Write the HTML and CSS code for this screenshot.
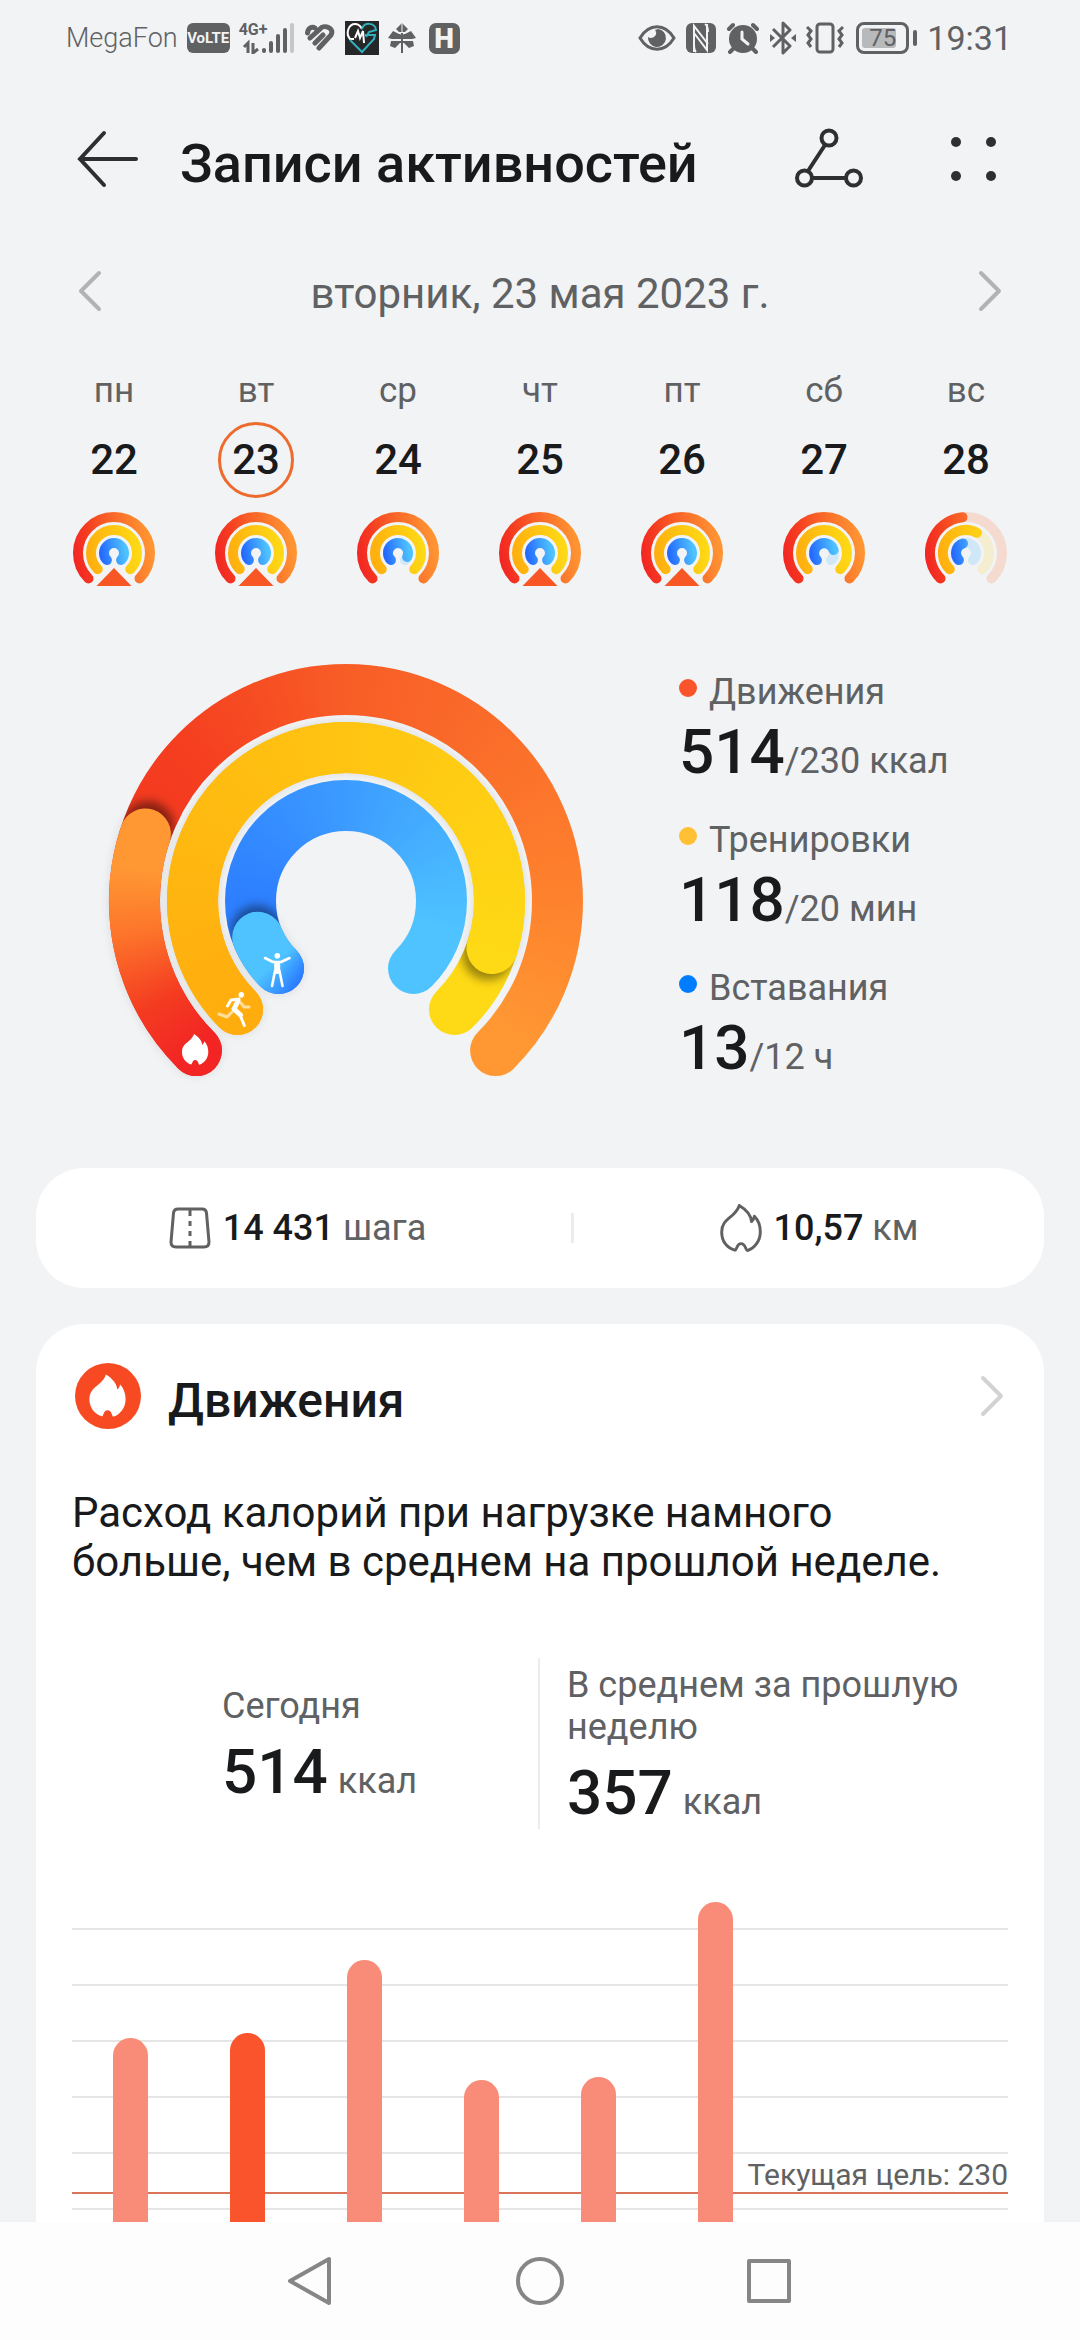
FILE: index.html
```html
<!DOCTYPE html>
<html lang="ru">
  <head>
    <meta charset="UTF-8" />
    <meta name="viewport" content="width=device-width, initial-scale=1.0" />
    <title>Записи активностей</title>
    <link rel="stylesheet" href="styles.css">
  </head>
  <body>
    <!-- Shared shapes -->
    <svg class="defs" width="0" height="0" aria-hidden="true">
      <defs>
        <linearGradient id="miniRed" gradientUnits="userSpaceOnUse" x1="-38" y1="25" x2="40" y2="10">
          <stop offset="0" stop-color="#f22424" />
          <stop offset="0.25" stop-color="#f53c20" />
          <stop offset="0.5" stop-color="#f85d26" />
          <stop offset="1" stop-color="#ff9432" />
        </linearGradient>
        <linearGradient id="miniYellow" gradientUnits="userSpaceOnUse" x1="-26" y1="16" x2="27" y2="8">
          <stop offset="0" stop-color="#ffad0e" />
          <stop offset="1" stop-color="#fed915" />
        </linearGradient>
        <linearGradient id="miniBlue" gradientUnits="userSpaceOnUse" x1="-12" y1="10" x2="13" y2="6">
          <stop offset="0" stop-color="#2468ff" />
          <stop offset="1" stop-color="#4ec3ff" />
        </linearGradient>
        <symbol id="mini-track" viewBox="-41 -41 82 82">
          <g fill="none" stroke-width="10" stroke-linecap="round">
            <path stroke="#f4dacf" d="M-25.5 25.5A36 36 0 1 1 25.5 25.5" />
            <path stroke="#f4edd0" d="M-16.3 16.3A23 23 0 1 1 16.3 16.3" />
            <path stroke="#cfe7f6" d="M-7.1 7.1A10 10 0 1 1 7.1 7.1" />
          </g>
        </symbol>
        <symbol id="mini-outer" viewBox="-41 -41 82 82">
          <g fill="none" stroke-width="10" stroke-linecap="round">
            <path stroke="url(#miniRed)" d="M-25.5 25.5A36 36 0 1 1 25.5 25.5" />
            <path stroke="url(#miniYellow)" d="M-16.3 16.3A23 23 0 1 1 16.3 16.3" />
          </g>
        </symbol>
        <symbol id="mini-full" viewBox="-41 -41 82 82">
          <use href="#mini-outer" x="-41" y="-41" width="82" height="82" />
          <path fill="none" stroke="url(#miniBlue)" stroke-width="10" stroke-linecap="round" d="M-7.1 7.1A10 10 0 1 1 7.1 7.1" />
        </symbol>
        <symbol id="mini-goal" viewBox="-41 -41 82 82">
          <use href="#mini-full" x="-41" y="-41" width="82" height="82" />
          <path fill="#f85725" d="M0 15L17.5 33H-17.5Z" />
        </symbol>
        <symbol id="flame" viewBox="-1 -1 28.3 32.7">
          <path d="M12 0C17 3 20 7 20.3 11C21.3 10 22 9 22.3 7.3C25 10 26.3 14 26.3 18C26.3 24 22.5 29 17.5 30.7C16.2 30.7 16.5 26 13.2 26C10 26 10.4 30.6 9 30.5C3.5 28.5 0 24 0 18C0 11 5 9 8 6C10 4 11.5 2 12 0Z" />
        </symbol>
      </defs>
    </svg>

    <div class="status-bar">
      <div class="status-left">
        <span class="carrier">MegaFon</span>
        <span class="volte">VoLTE</span>
        <span class="signal">
          <span class="network">4G+</span>
          <svg width="56" height="32" viewBox="0 0 56 32">
            <g fill="none" stroke="#606163" stroke-width="3">
              <path d="M9 31V21L5 25M14 21V31L19 27" />
            </g>
            <g fill="#606163">
              <rect x="23" y="26" width="4" height="5" rx="2" />
              <rect x="30" y="19" width="4" height="12" rx="2" />
              <rect x="37" y="12" width="4" height="19" rx="2" />
              <rect x="44" y="6" width="4" height="25" rx="2" />
            </g>
            <rect x="51" y="1" width="4" height="30" rx="2" fill="#c6c7c9" />
          </svg>
        </span>
        <svg width="32" height="28" viewBox="0 0 32 28" fill="none" stroke="#606163" stroke-width="5" stroke-linecap="round">
          <path d="M3.5 9C4 4 8 2 11 4M6 14L16 5C20 0 31 4 27 11L15 24M11 19L19 11" />
        </svg>
        <svg width="34" height="34" viewBox="0 0 34 34" fill="none" stroke-width="2">
          <rect width="34" height="34" fill="#262728" />
          <path stroke="#fff" d="M9 18H5C0 12 4 3 10 3C14 3 16 6 17 8M10 17L13 10L15 17L18 10L19 22" />
          <path stroke="#31b0bb" d="M17 8C19 1 30 1 31 9L24 11L21 16M5 19L17 31L29 18L30 14H20" />
        </svg>
        <svg width="28" height="30" viewBox="0 0 28 30" fill="#606163">
          <path d="M14 0L20 6L17 9H11L8 6ZM5 8L11 11H17L23 8L28 15L24 16H4L0 15ZM3 18H25L26 23L21 25L16 20H12L7 25L2 23Z" />
          <path stroke="#f1f3f5" stroke-width="1" d="M14 0V28M14 12L6 6M14 12L22 6" fill="none" />
          <path d="M13 10H15V30H13Z" />
        </svg>
        <span class="app-h">H</span>
      </div>
      <div class="status-right">
        <svg width="38" height="28" viewBox="0 0 38 28">
          <path fill="none" stroke="#606163" stroke-width="3" d="M2 14C11 -1 27 -1 36 14C27 29 11 29 2 14Z" />
          <path fill="#606163" d="M20 5A9 9 0 1 1 10 13C14 16 21 11 17 6Z" />
        </svg>
        <svg width="30" height="30" viewBox="0 0 30 30">
          <rect width="30" height="30" rx="6" fill="#606163" />
          <path fill="none" stroke="#f1f3f5" stroke-width="2" d="M8 29V3L22 21M21 1V27L8 10M19 1C22 3 22 6 22 9M10 29C8 27 8 24 8 21" />
        </svg>
        <svg width="34" height="32" viewBox="0 0 34 32" fill="none" stroke="#606163" stroke-width="4" stroke-linecap="round">
          <circle cx="17" cy="17" r="14" fill="#606163" stroke="none" />
          <path d="M3 7L7 3M27 3L31 7M7 27L4 30M27 27L30 30" />
          <path stroke="#f1f3f5" stroke-width="3" d="M16 10V17L22 22" />
        </svg>
        <svg width="26" height="34" viewBox="0 0 26 34" fill="none" stroke="#606163" stroke-width="3" stroke-linejoin="round">
          <path d="M3 8L20 25L13 32V2L20 9L3 26" />
          <path fill="#606163" stroke="none" d="M0 13L5 17L0 21ZM26 13L21 17L26 21Z" />
        </svg>
        <svg width="38" height="32" viewBox="0 0 38 32" fill="none" stroke="#606163" stroke-width="3">
          <rect x="11" y="2" width="16" height="28" rx="3" />
          <path d="M1 5L5 9L2 13L5 17L2 21L5 25M37 5L33 9L36 13L33 17L36 21L33 25" />
        </svg>
        <span class="battery"><span class="battery-level">75</span></span>
        <span class="clock">19:31</span>
      </div>
    </div>

    <header class="app-header">
      <button class="icon-btn" aria-label="Назад">
        <svg width="64" height="60" viewBox="0 0 64 60" fill="none" stroke="#2e2f30" stroke-width="4" stroke-linecap="round">
          <path d="M28 4L4 30L28 56M4 30H60" />
        </svg>
      </button>
      <h1>Записи активностей</h1>
      <button class="icon-btn route-btn" aria-label="Маршрут">
        <svg width="70" height="64" viewBox="0 0 70 64" fill="none" stroke="#2e2f30" stroke-width="4">
          <circle cx="35" cy="11" r="7.5" />
          <circle cx="10.5" cy="51" r="7.5" />
          <circle cx="59.5" cy="51" r="7.5" />
          <path d="M31 18L14 44M18 51H52" />
        </svg>
      </button>
      <button class="icon-btn" aria-label="Меню">
        <svg width="48" height="48" viewBox="0 0 48 48" fill="#2e2f30">
          <circle cx="6" cy="7" r="5" />
          <circle cx="41" cy="7" r="5" />
          <circle cx="6" cy="41" r="5" />
          <circle cx="41" cy="41" r="5" />
        </svg>
      </button>
    </header>

    <main>
      <div class="date-nav">
        <button class="icon-btn" aria-label="Предыдущий день">
          <svg width="24" height="42" viewBox="0 0 24 42" fill="none" stroke="#b2b3b5" stroke-width="4" stroke-linecap="round" stroke-linejoin="round">
            <path d="M21 3L3 21L21 39" />
          </svg>
        </button>
        <span>вторник, 23 мая 2023 г.</span>
        <button class="icon-btn" aria-label="Следующий день">
          <svg width="24" height="42" viewBox="0 0 24 42" fill="none" stroke="#b2b3b5" stroke-width="4" stroke-linecap="round" stroke-linejoin="round">
            <path d="M3 3L21 21L3 39" />
          </svg>
        </button>
      </div>

      <div class="week">
        <button class="day">
          <span class="weekday">пн</span>
          <span class="number">22</span>
          <svg class="mini"><use href="#mini-goal" /></svg>
        </button>
        <button class="day active">
          <span class="weekday">вт</span>
          <span class="number">23</span>
          <svg class="mini"><use href="#mini-goal" /></svg>
        </button>
        <button class="day">
          <span class="weekday">ср</span>
          <span class="number">24</span>
          <svg class="mini" viewBox="-41 -41 82 82">
            <use href="#mini-track" x="-41" y="-41" width="82" height="82" />
            <use href="#mini-outer" x="-41" y="-41" width="82" height="82" />
            <path fill="none" stroke="url(#miniBlue)" stroke-width="10" stroke-linecap="round" d="M-7.1 7.1A10 10 0 1 1 9.2 4" />
          </svg>
        </button>
        <button class="day">
          <span class="weekday">чт</span>
          <span class="number">25</span>
          <svg class="mini"><use href="#mini-goal" /></svg>
        </button>
        <button class="day">
          <span class="weekday">пт</span>
          <span class="number">26</span>
          <svg class="mini"><use href="#mini-goal" /></svg>
        </button>
        <button class="day">
          <span class="weekday">сб</span>
          <span class="number">27</span>
          <svg class="mini" viewBox="-41 -41 82 82">
            <use href="#mini-track" x="-41" y="-41" width="82" height="82" />
            <use href="#mini-outer" x="-41" y="-41" width="82" height="82" />
            <path fill="none" stroke="url(#miniBlue)" stroke-width="10" stroke-linecap="round" d="M-7.1 7.1A10 10 0 1 1 9.6 -3" />
          </svg>
        </button>
        <button class="day">
          <span class="weekday">вс</span>
          <span class="number">28</span>
          <svg class="mini" viewBox="-41 -41 82 82">
            <use href="#mini-track" x="-41" y="-41" width="82" height="82" />
            <g fill="none" stroke-width="10" stroke-linecap="round">
              <path stroke="url(#miniRed)" d="M-25.5 25.5A36 36 0 0 1 -3.5 -35.8" />
              <path stroke="url(#miniYellow)" d="M-16.3 16.3A23 23 0 0 1 11 -20.2" />
              <path stroke="url(#miniBlue)" d="M-7.1 7.1A10 10 0 0 1 -3 -9.5" />
            </g>
          </svg>
        </button>
      </div>

      <section class="summary">
        <svg class="rings" width="498" height="440" viewBox="-249 -249 498 440">
          <defs>
            <filter id="soft" x="-30%" y="-30%" width="160%" height="160%">
              <feGaussianBlur stdDeviation="5" />
            </filter>
            <mask id="outerMask" maskUnits="userSpaceOnUse" x="-249" y="-249" width="498" height="440">
              <path class="arc-mask" d="M-149.6 149.6A211.5 211.5 0 1 1 149.6 149.6" />
            </mask>
            <mask id="outerLap" maskUnits="userSpaceOnUse" x="-249" y="-249" width="498" height="440">
              <path class="arc-mask" d="M-149.6 149.6A211.5 211.5 0 0 1 -200.6 -67" />
            </mask>
            <mask id="middleMask" maskUnits="userSpaceOnUse" x="-249" y="-249" width="498" height="440">
              <path class="arc-mask" d="M-108.5 108.5A153.5 153.5 0 1 1 108.5 108.5" />
            </mask>
            <mask id="middleLap" maskUnits="userSpaceOnUse" x="-249" y="-249" width="498" height="440">
              <path class="arc-mask" d="M-108.5 108.5A153.5 153.5 0 1 1 146 47.5" />
            </mask>
            <mask id="innerMask" maskUnits="userSpaceOnUse" x="-249" y="-249" width="498" height="440">
              <path class="arc-mask" d="M-67.5 67.5A95.5 95.5 0 1 1 67.5 67.5" />
            </mask>
            <mask id="innerLap" maskUnits="userSpaceOnUse" x="-249" y="-249" width="498" height="440">
              <path class="arc-mask" d="M-67.5 67.5A95.5 95.5 0 0 1 -88.3 36.3" />
            </mask>
          </defs>

          <!-- soft shadow under the laps -->
          <g fill="none" stroke="#000" stroke-opacity="0.1" stroke-width="51" stroke-linecap="round" filter="url(#soft)">
            <path d="M-149.6 149.6A211.5 211.5 0 0 1 -200.6 -67" />
            <path d="M-108.5 108.5A153.5 153.5 0 1 1 146 47.5" />
            <path d="M-67.5 67.5A95.5 95.5 0 0 1 -88.3 36.3" />
          </g>

          <!-- movement -->
          <g mask="url(#outerMask)">
            <foreignObject x="-249" y="-249" width="498" height="498"><div class="sweep sweep-red"></div></foreignObject>
            <circle cx="-198" cy="-74" r="26" fill="#000" fill-opacity="0.45" filter="url(#soft)" />
          </g>
          <g mask="url(#outerLap)">
            <foreignObject x="-249" y="-249" width="498" height="498"><div class="sweep sweep-red-lap"></div></foreignObject>
          </g>

          <!-- workouts -->
          <g mask="url(#middleMask)">
            <foreignObject x="-249" y="-249" width="498" height="498"><div class="sweep sweep-yellow"></div></foreignObject>
            <circle cx="142" cy="53" r="26" fill="#000" fill-opacity="0.4" filter="url(#soft)" />
          </g>
          <g mask="url(#middleLap)">
            <foreignObject x="-249" y="-249" width="498" height="498"><div class="sweep sweep-yellow"></div></foreignObject>
          </g>

          <!-- standing -->
          <g mask="url(#innerMask)">
            <foreignObject x="-249" y="-249" width="498" height="498"><div class="sweep sweep-blue"></div></foreignObject>
            <circle cx="-89" cy="30" r="26" fill="#000" fill-opacity="0.4" filter="url(#soft)" />
          </g>
          <g mask="url(#innerLap)">
            <foreignObject x="-249" y="-249" width="498" height="498"><div class="sweep sweep-blue-lap"></div></foreignObject>
          </g>

          <use href="#flame" x="-165" y="132" width="28.3" height="32.7" fill="#fff" />

          <g fill="none" stroke="#fff" stroke-linecap="round" stroke-linejoin="round" stroke-width="3">
            <path stroke-opacity="0.6" d="M-114 111L-119 116L-127 113M-105 102L-102 106L-97 106" />
            <path d="M-118.5 105L-115 99L-107 98" />
            <path stroke-width="5" d="M-108 100L-112 108L-105.5 114" />
            <path d="M-106 114L-101.7 124.5" />
            <circle cx="-104.7" cy="93.7" r="2.8" fill="#fff" stroke="none" />
          </g>

          <g fill="none" stroke="#fff" stroke-linecap="round" stroke-linejoin="round" stroke-width="2.6">
            <path d="M-81 57L-73 61H-65L-56.5 57M-71 70L-74 85M-66.5 70L-63.5 85" />
            <path stroke-width="6" d="M-68.8 63V70" />
            <circle cx="-68.7" cy="54.7" r="2.8" fill="#fff" stroke="none" />
          </g>
        </svg>

        <div class="legend">
          <div class="legend-item">
            <div class="legend-label"><i class="dot dot-red"></i>Движения</div>
            <div class="value-row"><b class="value">514</b><span class="unit">/230 ккал</span></div>
          </div>
          <div class="legend-item">
            <div class="legend-label"><i class="dot dot-yellow"></i>Тренировки</div>
            <div class="value-row"><b class="value">118</b><span class="unit">/20 мин</span></div>
          </div>
          <div class="legend-item">
            <div class="legend-label"><i class="dot dot-blue"></i>Вставания</div>
            <div class="value-row"><b class="value">13</b><span class="unit">/12 ч</span></div>
          </div>
        </div>
      </section>

      <section class="card totals">
        <div class="total">
          <svg width="42" height="44" viewBox="0 0 42 44" fill="none" stroke="#606163" stroke-width="3">
            <path d="M9 3H33Q37 3 37.5 7L40 36Q40 41 35 41H7Q2 41 2 36L4.500 7Q5 3 9 3Z" />
            <path d="M21 4V10M21 15V20M21 25V30M21 35V41" />
          </svg>
          <span><b>14 431</b> шага</span>
        </div>
        <div class="total-divider"></div>
        <div class="total">
          <svg width="42" height="48" fill="none" stroke="#606163" stroke-width="2" stroke-linejoin="round"><use href="#flame" /></svg>
          <span><b>10,57</b> км</span>
        </div>
      </section>

      <section class="card movement">
        <div class="card-head">
          <svg width="66" height="66" viewBox="0 0 66 66">
            <circle cx="33" cy="33" r="33" fill="#f84a22" />
            <use href="#flame" x="13" y="10" width="39" height="45" fill="#fff" />
          </svg>
          <h2>Движения</h2>
          <button class="icon-btn" aria-label="Подробнее">
            <svg width="24" height="42" viewBox="0 0 24 42" fill="none" stroke="#d2d3d4" stroke-width="4" stroke-linecap="round" stroke-linejoin="round">
              <path d="M3 3L21 21L3 39" />
            </svg>
          </button>
        </div>

        <p class="note">Расход калорий при нагрузке намного больше, чем в среднем на прошлой неделе.</p>

        <div class="compare">
          <div class="compare-item">
            <span class="compare-label">Сегодня</span>
            <div class="value-row"><b class="value">514</b><span class="unit spaced">ккал</span></div>
          </div>
          <div class="compare-item">
            <span class="compare-label">В среднем за прошлую неделю</span>
            <div class="value-row"><b class="value">357</b><span class="unit spaced">ккал</span></div>
          </div>
        </div>

        <div class="chart">
          <div class="grid-lines">
            <div></div><div></div><div></div><div></div><div></div><div></div>
          </div>
          <div class="goal">Текущая цель: 230</div>
          <div class="bars">
            <div class="bar" style="height: 234px"></div>
            <div class="bar current" style="height: 239px"></div>
            <div class="bar" style="height: 312px"></div>
            <div class="bar" style="height: 192px"></div>
            <div class="bar" style="height: 195px"></div>
            <div class="bar" style="height: 370px"></div>
          </div>
        </div>
      </section>
    </main>

    <nav class="system-nav">
      <button class="icon-btn" aria-label="Назад">
        <svg width="48" height="52" viewBox="0 0 48 52" fill="none" stroke="#868686" stroke-width="4" stroke-linejoin="round">
          <path d="M42 4V48L3 26Z" />
        </svg>
      </button>
      <button class="icon-btn" aria-label="Домой">
        <svg width="48" height="48" viewBox="0 0 48 48" fill="none" stroke="#868686" stroke-width="4">
          <circle cx="24" cy="24" r="22" />
        </svg>
      </button>
      <button class="icon-btn" aria-label="Недавние">
        <svg width="48" height="48" viewBox="0 0 48 48" fill="none" stroke="#868686" stroke-width="4" stroke-linejoin="round">
          <rect x="4" y="4" width="40" height="40" />
        </svg>
      </button>
    </nav>
  </body>
</html>
```
FILE: styles.css
```css
* {
  box-sizing: border-box;
}
body {
  margin: 0;
  height: 100vh;
  display: flex;
  flex-direction: column;
  overflow: hidden;
  background-color: #f1f3f5;
  color: #191a1b;
  font-family: Roboto, "Noto Sans", sans-serif;
}
.defs {
  position: absolute;
}
svg {
  display: block;
  flex: none;
}
button {
  padding: 0;
  border: none;
  background: none;
  color: inherit;
  font: inherit;
  cursor: pointer;
}
h1,
h2,
p {
  margin: 0;
}

/* Status bar */
.status-bar {
  flex: none;
  height: 76px;
  padding: 0 68px 0 66px;
  display: flex;
  justify-content: space-between;
  align-items: center;
  color: #606163;
}
.status-left,
.status-right {
  display: flex;
  align-items: center;
  gap: 10px;
}
.status-left {
  gap: 9px;
}
.carrier {
  font-size: 27px;
  font-weight: 300;
}
.volte {
  width: 43px;
  height: 30px;
  border-radius: 6px;
  background-color: #606163;
  color: #f1f3f5;
  font-size: 15px;
  font-weight: 700;
  line-height: 30px;
  text-align: center;
}
.signal {
  position: relative;
}
.network {
  position: absolute;
  top: 0;
  left: 0;
  font-size: 16px;
  font-weight: 700;
  line-height: 16px;
}
.app-h {
  width: 31px;
  height: 31px;
  margin-left: 4px;
  border-radius: 7px;
  background-color: #606163;
  color: #f1f3f5;
  font-size: 28px;
  font-weight: 900;
  line-height: 31px;
  text-align: center;
}
.battery {
  position: relative;
  width: 53px;
  height: 32px;
  margin: 0 8px 0 2px;
  padding: 3px;
  border: 3px solid #606163;
  border-radius: 8px;
}
.battery::after {
  content: "";
  position: absolute;
  top: 5px;
  right: -11px;
  width: 4px;
  height: 16px;
  border-radius: 2px;
  background-color: #606163;
}
.battery-level {
  display: block;
  width: 34px;
  height: 20px;
  padding-left: 7px;
  border-radius: 3px;
  background-color: #b8b9bb;
  font-size: 24px;
  line-height: 20px;
}
.clock {
  font-size: 34px;
}

/* Header */
.app-header {
  flex: none;
  height: 166px;
  padding: 0 82px 0 76px;
  display: flex;
  align-items: center;
}
.app-header h1 {
  flex: 1;
  padding: 8px 0 0 40px;
  font-size: 54px;
  font-weight: 500;
}
.route-btn {
  margin-right: 86px;
}

main {
  flex: 1;
  min-height: 0;
  overflow: hidden;
}
.date-nav {
  height: 98px;
  padding: 0 78px;
  display: flex;
  justify-content: space-between;
  align-items: center;
  color: #606163;
  font-size: 42px;
}
.date-nav span {
  padding-top: 4px;
}

/* Week */
.week {
  padding: 31px 43px 0;
  display: grid;
  grid-template-columns: repeat(7, 1fr);
}
.day {
  display: flex;
  flex-direction: column;
  align-items: center;
}
.weekday {
  color: #606163;
  font-size: 35px;
  line-height: 40px;
}
.number {
  width: 76px;
  height: 76px;
  margin: 11px 0 14px;
  border: 3px solid transparent;
  border-radius: 50%;
  font-size: 42px;
  font-weight: 500;
  line-height: 70px;
}
.day.active .number {
  border-color: #ed6b2d;
}
.mini {
  width: 82px;
  height: 82px;
}

/* Rings */
.summary {
  margin-top: 58px;
  padding: 0 36px 0 97px;
  display: flex;
  gap: 84px;
}
.arc-mask {
  fill: none;
  stroke: #fff;
  stroke-width: 51px;
  stroke-linecap: round;
}
.sweep {
  width: 498px;
  height: 498px;
}
.sweep-red {
  background: conic-gradient(from 225deg, #f22424 0deg, #f43a20 70deg, #f53f20 90deg, #f85d26 135deg, #fa6c2a 175deg, #fe822d 225deg, #ff9833 265deg, #ff9833 315deg, #f22424 315deg);
}
.sweep-red-lap {
  background: conic-gradient(from 225deg, #f22424 0deg, #f43c21 17deg, #fd762b 37deg, #ff9833 54deg, #ff9833 200deg, #f22424 200deg);
}
.sweep-yellow {
  background: conic-gradient(from 225deg, #ffad0e 0deg, #ffc412 135deg, #fed915 245deg, #fed915 315deg, #ffad0e 315deg);
}
.sweep-blue {
  background: conic-gradient(from 225deg, #2979ff 0deg, #2e80ff 50deg, #3c9bff 135deg, #4ec3ff 240deg, #4ec3ff 315deg, #2979ff 315deg);
}
.sweep-blue-lap {
  background: conic-gradient(from 205deg, #2370ff 0deg, #2b7eff 6deg, #4ec3ff 24deg, #4ec3ff 200deg, #2370ff 200deg);
}
.legend {
  padding-top: 16px;
  display: flex;
  flex-direction: column;
  gap: 28px;
}
.legend-label {
  display: flex;
  align-items: center;
  color: #606163;
  font-size: 36px;
  line-height: 48px;
}
.dot {
  width: 18px;
  height: 18px;
  margin: 0 12px 8px 0;
  border-radius: 50%;
}
.dot-red {
  background-color: #f9542c;
}
.dot-yellow {
  background-color: #ffc033;
}
.dot-blue {
  background-color: #007dff;
}
.value-row {
  display: flex;
  align-items: baseline;
}
.value {
  font-size: 62px;
  font-weight: 500;
  line-height: 72px;
}
.unit {
  color: #606163;
  font-size: 36px;
  line-height: 48px;
}
.unit.spaced {
  margin-left: 10px;
}

/* Cards */
.card {
  margin: 0 36px;
  border-radius: 48px;
  background-color: #fff;
}
.totals {
  height: 120px;
  margin-top: 76px;
  display: grid;
  grid-template-columns: 535fr 3px 470fr;
  align-items: center;
}
.total {
  padding-right: 12px;
  display: flex;
  justify-content: center;
  align-items: center;
  gap: 12px;
  color: #606163;
  font-size: 36px;
}
.total:last-child {
  padding: 0 0 0 20px;
}
.total b {
  color: #191a1b;
  font-weight: 500;
}
.total-divider {
  height: 30px;
  background-color: #ececed;
}
.movement {
  margin-top: 36px;
  padding: 39px 36px 0;
}
.card-head {
  padding: 0 4px 0 3px;
  display: flex;
  align-items: center;
}
.card-head h2 {
  flex: 1;
  padding: 8px 0 0 27px;
  font-size: 48px;
  font-weight: 500;
}
.note {
  margin-top: 59px;
  padding-right: 48px;
  font-size: 42px;
  line-height: 49px;
}
.compare {
  min-height: 171px;
  margin-top: 72px;
  display: grid;
  grid-template-columns: 1fr 1fr;
}
.compare-item {
  padding: 6px 24px 0 27px;
  display: flex;
  flex-direction: column;
  justify-content: center;
  gap: 9px;
}
.compare-item:first-child {
  padding-left: 150px;
  border-right: 2px solid #ececed;
}
.compare-label {
  color: #606163;
  font-size: 36px;
  line-height: 42px;
}

/* Chart */
.chart {
  position: relative;
  height: 370px;
  margin-top: 73px;
}
.grid-lines {
  padding-top: 26px;
}
.grid-lines div {
  height: 56px;
  border-top: 2px solid #e5e5e5;
}
.goal {
  position: absolute;
  top: 250px;
  left: 0;
  right: 0;
  height: 42px;
  border-bottom: 2px solid #d9735a;
  color: #606163;
  font-size: 30px;
  line-height: 46px;
  text-align: right;
}
.bars {
  position: absolute;
  top: 0;
  left: 0;
  right: 0;
  height: 370px;
  display: grid;
  grid-template-columns: repeat(8, 1fr);
  align-items: end;
  justify-items: center;
}
.bar {
  width: 35px;
  border-radius: 18px 18px 0 0;
  background-color: #f98c78;
}
.bar.current {
  background-color: #f9542c;
}

/* System navigation */
.system-nav {
  flex: none;
  height: 118px;
  display: flex;
  justify-content: center;
  align-items: center;
  gap: 181px;
  background-color: #fdfdfd;
}
```
